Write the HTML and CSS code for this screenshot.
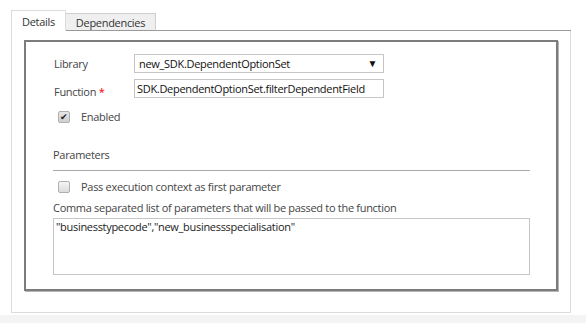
FILE: index.html
```html
<!DOCTYPE html>
<html lang="en">
<head>
  <meta charset="UTF-8" />
  <title>Handler Properties</title>
  <link rel="stylesheet" href="styles.css">
</head>
<body>

  <div class="dialog">
    <div class="tabs">
      <div class="tab active">Details</div>
      <div class="tab">Dependencies</div>
      <div class="tab-fill"></div>
    </div>

    <div class="panel">
      <div class="group">
        <div class="form-grid">
          <label class="lbl">Library</label>
          <div class="select">
            <span>new_SDK.DependentOptionSet</span>
            <span class="arrow">&#9660;</span>
          </div>
          <label class="lbl lbl-low">Function <span class="req">*</span></label>
          <div class="input">SDK.DependentOptionSet.filterDependentField</div>
        </div>

        <div class="check-row enabled-row">
          <span class="box checked">&#10004;</span>
          <span>Enabled</span>
        </div>

        <div class="section-title">Parameters</div>

        <div class="check-row pass-row">
          <span class="box"></span>
          <span>Pass execution context as first parameter</span>
        </div>

        <div class="hint">Comma separated list of parameters that will be passed to the function</div>
        <div class="textarea">"businesstypecode","new_businessspecialisation"</div>
      </div>
    </div>
  </div>

  <div class="footer"></div>

</body>
</html>
```

FILE: styles.css
```css
body {
  margin: 0;
  padding: 10px 0 0 11px;
  background: #fff;
  font-family: 'Open Sans', sans-serif;
  font-size: 11px;
  letter-spacing: -0.3px;
  color: #444;
}

.dialog {
  width: 560px;
}

/* tabs */
.tabs {
  display: flex;
  align-items: flex-end;
}

.tab {
  box-sizing: border-box;
  height: 18px;
  line-height: 17px;
  width: 90px;
  text-align: center;
  background: #efefef;
  border: 1px solid #cfcfcf;
  border-left: none;
  border-bottom: 1px solid #999;
  color: #333;
}

.tab.active {
  width: 55px;
  height: 21px;
  line-height: 21px;
  background: #fff;
  border: 1px solid #dcdcdc;
  border-bottom: none;
}

.tab-fill {
  flex: 1;
  border-bottom: 1px solid #999;
}

/* panel */
.panel {
  border: 1px solid #dcdcdc;
  border-top: none;
  padding: 9px 12px 21px 12px;
}

.group {
  border: 2px solid #7c7c7c;
  box-shadow: 1px 1px 0 #b5b5b5;
  padding: 12px 26px 14px 27px;
}

.form-grid {
  display: grid;
  grid-template-columns: 80px 250px;
  row-gap: 5px;
  margin-left: 1px;
  align-items: center;
}

.lbl {
  line-height: 19px;
}

.lbl-low {
  padding-top: 7px;
  line-height: 14px;
}

.req {
  color: #e00;
}

.select, .input {
  box-sizing: border-box;
  height: 19px;
  border: 1px solid #c6c6c6;
  color: #111;
  line-height: 17px;
  white-space: nowrap;
  overflow: hidden;
}

.select {
  display: flex;
  justify-content: space-between;
  padding: 0 6px 0 4px;
}

.arrow {
  font-size: 10px;
  color: #111;
}

.input {
  padding: 0 2px;
}

/* checkboxes */
.check-row {
  display: flex;
  align-items: center;
  gap: 11px;
  height: 14px;
  line-height: 14px;
  margin-left: 5px;
}

.enabled-row {
  margin-top: 11px;
}

.pass-row {
  margin-top: 9px;
}

.box {
  box-sizing: border-box;
  width: 12px;
  height: 12px;
  border: 1px solid #b0b0b0;
  border-radius: 2px;
  background: linear-gradient(#f4f4f4, #dcdcdc);
  font-size: 9px;
  line-height: 10px;
  text-align: center;
  color: #222;
  letter-spacing: 0;
}

.box.checked {
  background: linear-gradient(#e6e6e6, #cfcfcf);
}

.section-title {
  margin-top: 23px;
  line-height: 16px;
  padding-bottom: 7px;
  border-bottom: 1px solid #a9a9a9;
}

.hint {
  margin-top: 6px;
  line-height: 16px;
}

.textarea {
  box-sizing: border-box;
  margin-top: 2px;
  height: 57px;
  border: 1px solid #c6c6c6;
  padding: 1px 2px;
  color: #222;
  line-height: 14px;
}

.footer {
  margin-top: 2px;
  height: 10px;
  background: #f4f4f4;
  margin-left: -11px;
}
```
